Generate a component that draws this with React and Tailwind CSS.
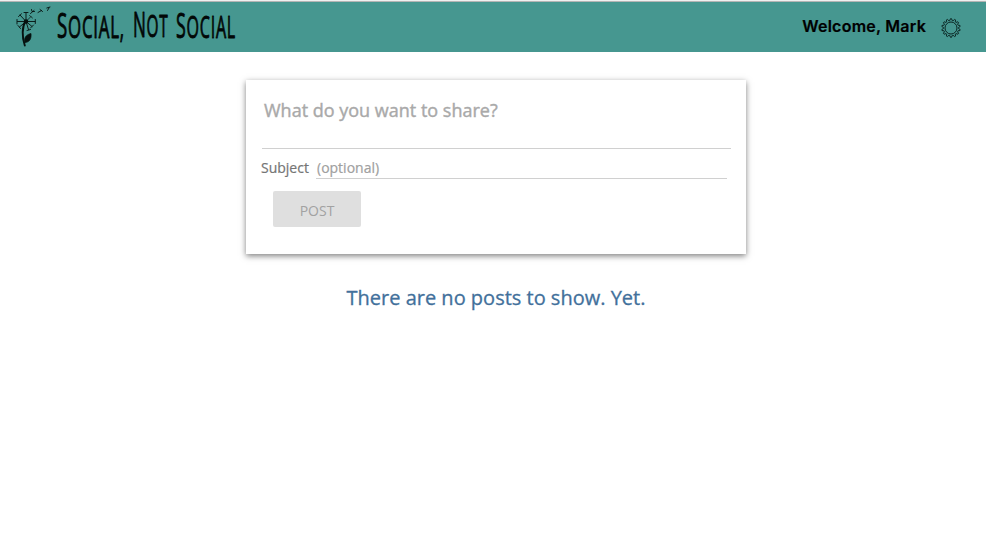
function Dandelion() {
  return (
    <svg className="h-[50px] w-[56px] shrink-0" viewBox="0 0 56 50" fill="none" stroke="#06110f" strokeLinecap="round">
      <path d="M25.500 19C22 25 21.800 35 24.800 43.500" strokeWidth="1.900" />
      <path d="M24.800 40.500C23.500 35.500 26.500 32.500 31 31.500C31.500 37 29.500 40.500 24.800 40.500Z" fill="#06110f" strokeWidth="0.700" />
      <circle cx="26" cy="19.500" r="2.300" fill="#06110f" stroke="none" />
      <path
        d="M26 19.500V11M24 10.500H28M26 19.500L20 13M18.500 14.500L21.500 11.800M26 19.500H17.500M17 17.500V22M26 19.500H35M35.300 17.500V21.500M26 19.500L19.500 25M18 23.500L20.500 26.500M26 19.500L32 24.500M33.500 23L30.500 26M26 19.500L28.500 27.500M27 28.500L30.500 27.500"
        strokeWidth="0.900"
      />
      <path d="M26 19.500L31 14.500M29.500 13.500L32.500 16" strokeWidth="0.700" />
      <path d="M30.500 11.500L34 8.500M31.500 7.500L32 9.500L34.500 9.500M38 10.500L41.500 8.500M40 7.500L42.500 9.500M47.500 8.500L49 6M46.800 6L50 5" strokeWidth="0.900" />
    </svg>
  );
}

function Wordmark() {
  return (
    <svg
      className="h-[50px] w-[184px] shrink-0 overflow-visible font-['Open_Sans',sans-serif] font-medium"
      viewBox="56 2 184 50"
      fill="#020706"
      stroke="#020706"
      strokeWidth="0.900"
      strokeLinejoin="round"
    >
      <text x="57" y="37.500" fontSize="35" letterSpacing="1.500" textLength="68" lengthAdjust="spacingAndGlyphs">
        S<tspan fontSize="31.500">OCIAL,</tspan>
      </text>
      <text x="133" y="37" fontSize="35" letterSpacing="1.500" textLength="35.500" lengthAdjust="spacingAndGlyphs">
        N<tspan fontSize="31.500">OT</tspan>
      </text>
      <text x="176" y="37.500" fontSize="35" letterSpacing="1.500" textLength="60" lengthAdjust="spacingAndGlyphs">
        S<tspan fontSize="31.500">OCIAL</tspan>
      </text>
    </svg>
  );
}

function GearIcon() {
  const count = 14;
  const points = Array.from({ length: count * 4 }, (_, i) => {
    const r = i % 4 < 2 ? 9.3 : 7.5;
    const a = ((i - 0.5) / (count * 4)) * Math.PI * 2;
    return `${10 + r * Math.sin(a)},${10 - r * Math.cos(a)}`;
  }).join(" ");
  return (
    <svg className="size-5" viewBox="0 0 20 20" fill="none" stroke="#0b2623" strokeWidth="1">
      <polygon points={points} />
      <circle cx="10" cy="10" r="6" />
    </svg>
  );
}

export default function App() {
  return (
    <div className="min-h-[547px] bg-white font-['Open_Sans',sans-serif]">
      <header className="border-t border-[#f0f0f0]">
        <div className="flex h-[51px] items-start border-t border-[#b5b5b5] bg-[#469790]">
          <Dandelion />
          <Wordmark />
          <div className="ml-auto flex h-[48px] items-center pr-[25px]">
            <span className="mr-[15px] font-['Inter',sans-serif] text-base leading-6 font-semibold tracking-[0.25px] text-black [-webkit-text-stroke:0.2px_black]">
              Welcome, Mark
            </span>
            <button className="mt-1" aria-label="Settings">
              <GearIcon />
            </button>
          </div>
        </div>
      </header>
      <main className="flex flex-col items-center pt-7 pl-[6px]">
        <form className="flex h-[174px] w-[500px] flex-col bg-white pt-[15px] pr-[15px] pl-[15px] shadow-[0_2px_6px_rgba(0,0,0,0.5)]">
          <textarea
            className="ml-px h-[54px] w-[469px] resize-none border-b border-[#d0d0d0] pt-px pl-[2px] text-[18px] leading-7 outline-none placeholder:text-[#a9a9a9] [-webkit-text-stroke:0.4px_#a9a9a9]"
            placeholder="What do you want to share?"
          />
          <label className="mt-2 flex h-[22px] items-start text-sm leading-[22px] text-[#757575] [-webkit-text-stroke:0.2px_#757575]">
            <span className="w-[55px]">Subject</span>
            <input
              className="h-[22px] w-[411px] border-b border-[#d0d0d0] pl-px leading-5 outline-none placeholder:text-[#a0a0a0] [-webkit-text-stroke:0.2px_#a0a0a0]"
              placeholder="(optional)"
            />
          </label>
          <button className="mt-3 ml-3 h-9 w-[88px] rounded-[2px] bg-[#dfdfdf] pt-[3px] text-sm text-[#a2a2a2]" disabled>
            POST
          </button>
        </form>
        <p className="mt-7 text-xl leading-8 text-[#42709b] [-webkit-text-stroke:0.3px_#42709b]">
          There are no posts to show. Yet.
        </p>
      </main>
    </div>
  );
}
